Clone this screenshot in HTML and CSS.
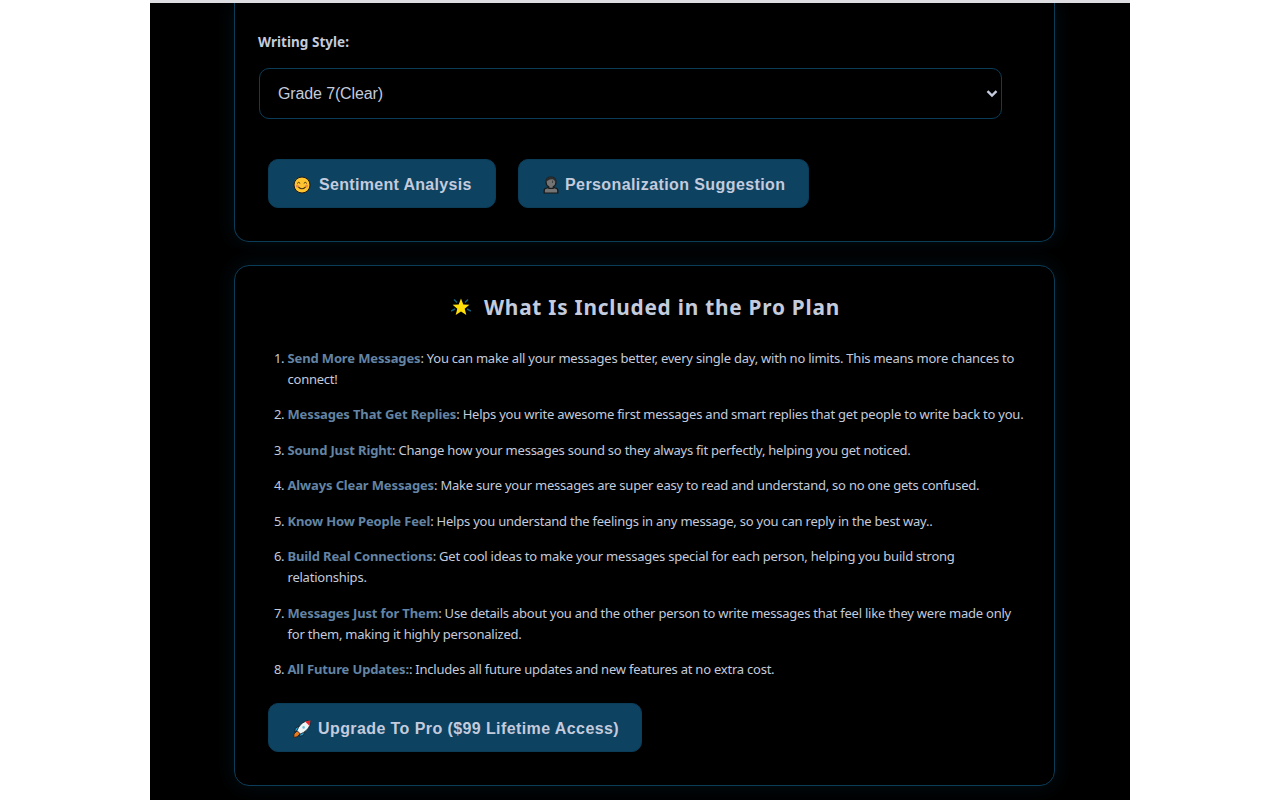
FILE: index.html
```
<!DOCTYPE html>
<html lang="en">
<head>
    <meta charset="UTF-8">
    <meta name="viewport" content="width=device-width, initial-scale=1.0">
    <title>Pro Plan</title>
    <link rel="stylesheet" href="styles.css">
</head>
<body>
    <div class="page">
        <div class="card style-card">
            <label for="writingStyle">Writing Style:</label>
            <div class="select-box">
                <select id="writingStyle">
                    <option>Grade 7(Clear)</option>
                </select>
                <svg class="arrow" width="12" height="8" viewBox="0 0 12 8"><path d="M1.5 1.2 L6 5.6 L10.5 1.2" fill="none" stroke="#c3cbdc" stroke-width="2.4"/></svg>
            </div>
            <div class="buttons">
                <button type="button" class="btn btn-sentiment">
                    <svg class="icon" width="18" height="18" viewBox="0 0 18 18">
                        <circle cx="9" cy="9" r="8" fill="#ffc530" stroke="#1c1a18" stroke-width="1"/>
                        <path d="M4.2 7.4 Q5.7 5.2 7.2 7.4 M10.8 7.4 Q12.3 5.2 13.8 7.4" fill="none" stroke="#4a3213" stroke-width="1"/>
                        <circle cx="4.4" cy="10" r="1.5" fill="#ef8a4d"/>
                        <circle cx="13.6" cy="10" r="1.5" fill="#ef8a4d"/>
                        <path d="M5.4 10.8 Q9 14.8 12.6 10.8" fill="none" stroke="#4a3213" stroke-width="1.1"/>
                    </svg>
                    <span>Sentiment Analysis</span>
                </button>
                <button type="button" class="btn btn-personal">
                    <svg class="icon" width="16" height="18" viewBox="0 0 16 18">
                        <path d="M1.2 17 V14.4 Q1.2 12.4 4 12 L6 11.4 H10 L12 12 Q14.8 12.4 14.8 14.4 V17 Z" fill="#747474" stroke="#161616" stroke-width="1.2"/>
                        <path d="M3 6 Q3 1 8 1 Q13 1 13 6 Q13 9.4 10.2 10.8 V12.4 H5.8 V10.8 Q3 9.4 3 6 Z" fill="#747474" stroke="#1d1d1d" stroke-width="1.2"/>
                        <path d="M3 5.6 Q3.4 1 8 1 Q12.6 1 13 5.6 L12 5.8 Q11.4 3.6 9.6 3.2 Q7 3 5 4.6 Z" fill="#2c2c2c"/>
                        <path d="M9.6 4.6 V7" stroke="#3a3a3a" stroke-width="0.9"/>
                    </svg>
                    <span>Personalization Suggestion</span>
                </button>
            </div>
        </div>

        <div class="card pro-card">
            <h2>
                <svg width="20" height="18" viewBox="0 0 20 18">
                    <path d="M3 1.4 L6 4.6 M17 1.4 L14 4.6 M0 13 L4 11 M20 13 L16 11" stroke="#13607c" stroke-width="1.4"/>
                    <path d="M10 0.6 L12.3 6.4 L18.4 6.8 L13.7 10.7 L15.3 17 L10 13.5 L4.7 17 L6.3 10.7 L1.6 6.8 L7.7 6.4 Z" fill="#ffde0a"/>
                </svg>
                <span>What Is Included in the Pro Plan</span>
            </h2>
            <ol>
                <li><strong>Send More Messages</strong>: You can make all your messages better, every single day, with no limits. This means more chances to<br>connect!</li>
                <li><strong>Messages That Get Replies</strong>: Helps you write awesome first messages and smart replies that get people to write back to you.</li>
                <li><strong>Sound Just Right</strong>: Change how your messages sound so they always fit perfectly, helping you get noticed.</li>
                <li><strong>Always Clear Messages</strong>: Make sure your messages are super easy to read and understand, so no one gets confused.</li>
                <li><strong>Know How People Feel</strong>: Helps you understand the feelings in any message, so you can reply in the best way..</li>
                <li><strong>Build Real Connections</strong>: Get cool ideas to make your messages special for each person, helping you build strong<br>relationships.</li>
                <li><strong>Messages Just for Them</strong>: Use details about you and the other person to write messages that feel like they were made only<br>for them, making it highly personalized.</li>
                <li><strong>All Future Updates:</strong>: Includes all future updates and new features at no extra cost.</li>
            </ol>
            <button type="button" class="btn btn-upgrade">
                <svg class="icon" width="18" height="18" viewBox="0 0 18 18">
                    <path d="M5 10 L1 14 L0.8 17.4 L4 16.8 L8 13 Z" fill="#e87a1d" stroke="#2a1a14" stroke-width="0.8"/>
                    <path d="M6 6 L2.4 8.2 L1.6 12 L6 10 Z M12 12 L9.8 15.6 L6 16.4 L8 12 Z" fill="#2298c8" stroke="#141d24" stroke-width="0.8"/>
                    <path d="M4 10.6 Q6.6 3.8 12.4 1.4 L17.4 0.6 L16.8 5.4 Q14.6 11 7.4 14 Z" fill="#eef4f6" stroke="#141d24" stroke-width="0.8"/>
                    <path d="M12 1.6 L17.4 0.6 L16.6 6 Z" fill="#e5262f"/>
                    <circle cx="10.6" cy="7.4" r="1.3" fill="#69bfdc"/>
                </svg>
                <span>Upgrade To Pro ($99 Lifetime Access)</span>
            </button>
        </div>
    </div>
</body>
</html>
```
FILE: styles.css
```
* {
    box-sizing: border-box;
}
body {
    margin: 0;
    background-color: #fff;
    font-family: 'Segoe UI', 'Noto Sans', sans-serif;
    color: #c3cbdc;
}
.page {
    width: 980px;
    height: 800px;
    margin: 0 auto;
    padding: 0 75px 0 84px;
    background-color: #000;
    border-top: 3px solid #dddde1;
    overflow: hidden;
}
.card {
    width: 821px;
    border: 1px solid #0b3d59;
    border-radius: 15px;
    background-color: #000;
    box-shadow: 0 0 20px rgba(14, 66, 97, 0.25);
}
.style-card {
    height: 239px;
    border-top: none;
    border-radius: 0 0 15px 15px;
    padding: 28px 23px 0;
}
label {
    display: block;
    height: 22px;
    line-height: 22px;
    font-size: 13.5px;
    font-weight: 700;
    letter-spacing: 0.03px;
}
.select-box {
    display: grid;
    align-items: center;
    width: 743px;
    margin: 15px 0 0 1px;
}
.select-box select,
.arrow {
    grid-area: 1 / 1;
}
.select-box select {
    width: 100%;
    height: 51px;
    padding: 0 18px;
    border: 1px solid #0b3d59;
    border-radius: 10px;
    background-color: #000;
    color: #c3cbdc;
    font-family: 'Liberation Sans', Arial, sans-serif;
    font-size: 16px;
    letter-spacing: -0.13px;
    appearance: none;
}
.arrow {
    justify-self: end;
    margin-right: 4px;
    pointer-events: none;
}
.buttons {
    display: flex;
    gap: 22px;
    margin: 40px 0 0 10px;
}
.btn {
    display: flex;
    align-items: center;
    height: 49px;
    padding: 2px 0 0 24px;
    border: 1px solid #0b3d59;
    border-radius: 10px;
    background-color: #0e4261;
    color: #c3cbdc;
    font-family: 'Liberation Sans', Arial, sans-serif;
    font-size: 16px;
    font-weight: 700;
    letter-spacing: 0.41px;
    white-space: nowrap;
}
.btn-sentiment {
    width: 228px;
    gap: 8px;
    letter-spacing: 0.32px;
}
.btn-personal {
    width: 291px;
    gap: 6px;
}
.btn-upgrade {
    width: 374px;
    gap: 7px;
    margin-left: 10px;
}
.pro-card {
    height: 521px;
    margin-top: 23px;
    padding: 25px 23px 0;
}
h2 {
    display: flex;
    align-items: center;
    justify-content: center;
    gap: 13px;
    height: 32px;
    margin: 0 0 24.9px;
    padding-left: 2px;
    font-size: 20.8px;
    font-weight: 700;
    letter-spacing: 0.77px;
    white-space: nowrap;
}
ol {
    margin: 0 0 23px;
    padding: 0 0 0 29.5px;
    font-size: 13px;
    line-height: 21px;
    letter-spacing: -0.23px;
    white-space: nowrap;
}
li {
    margin-bottom: 14.5px;
}
li:last-child {
    margin-bottom: 0;
}
li strong {
    color: #6384a4;
    letter-spacing: -0.14px;
}
```
